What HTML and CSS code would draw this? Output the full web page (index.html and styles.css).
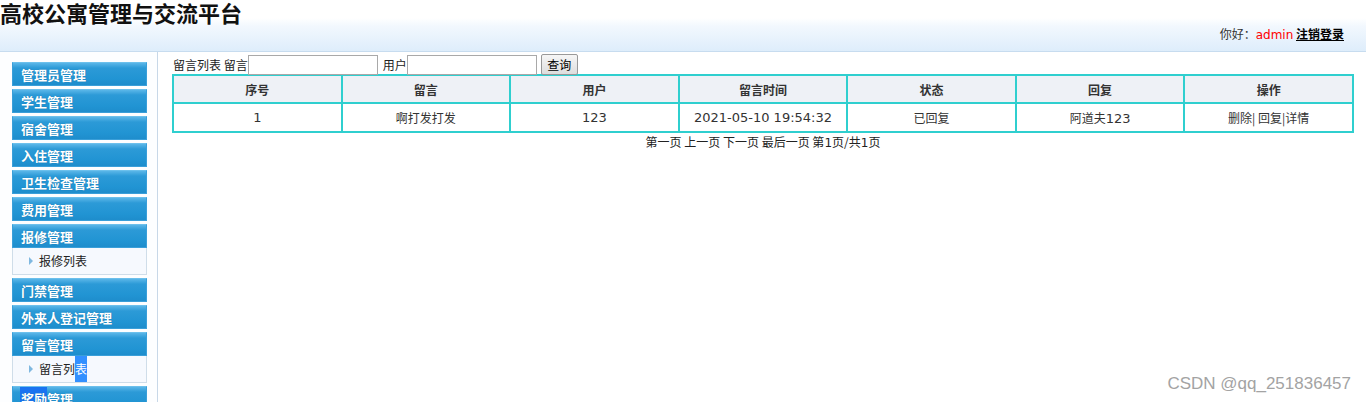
FILE: index.html
```html
<!DOCTYPE html>
<html lang="zh">
<head>
<meta charset="utf-8">
<title>高校公寓管理与交流平台</title>
<link rel="stylesheet" href="styles.css">
</head>
<body>
<div class="header">
  <h1 class="logo">高校公寓管理与交流平台</h1>
  <div class="userinfo">你好：<span class="uname">admin</span> <a class="logout" href="#">注销登录</a></div>
</div>
<div class="body">
  <div class="sidebar">
    <div class="menu">
      <div class="mh">管理员管理</div>
      <div class="mh">学生管理</div>
      <div class="mh">宿舍管理</div>
      <div class="mh">入住管理</div>
      <div class="mh">卫生检查管理</div>
      <div class="mh">费用管理</div>
      <div class="mh">报修管理</div>
      <div class="sub"><span class="tri"></span>报修列表</div>
      <div class="mh">门禁管理</div>
      <div class="mh">外来人登记管理</div>
      <div class="mh">留言管理</div>
      <div class="sub"><span class="tri"></span>留言列<span class="sel">表</span></div>
      <div class="mh"><span class="sel2">奖励</span>管理</div>
    </div>
  </div>
  <div class="main">
    <div class="search"><span class="lbl">留言列表 留言</span><input class="ipt" type="text"><span class="lbl lbl2">用户</span><input class="ipt" type="text"><button class="btn">查询</button></div>
    <table class="grid">
      <tr class="th">
        <td>序号</td><td>留言</td><td>用户</td><td>留言时间</td><td>状态</td><td>回复</td><td>操作</td>
      </tr>
      <tr>
        <td class="num">1</td><td>啊打发打发</td><td class="num">123</td><td class="num">2021-05-10 19:54:32</td><td>已回复</td><td>阿道夫<span class="n">123</span></td><td>删除| 回复|详情</td>
      </tr>
    </table>
    <div class="pager">第一页 上一页 下一页 最后一页 第<span class="n">1</span>页/共<span class="n">1</span>页</div>
  </div>
</div>
<div class="watermark">CSDN @qq_251836457</div>
</body>
</html>
```

FILE: styles.css
```css
html, body {
  margin: 0;
  padding: 0;
  background: #fff;
  height: 100%;
  overflow: hidden;
}
body {
  font-family: "DejaVu Sans", "Noto Sans CJK SC", sans-serif;
  font-size: 12px;
  color: #222;
  position: relative;
}
.header {
  height: 51px;
  border-bottom: 1px solid #c7dcef;
  background: linear-gradient(to bottom, #ffffff 0px, #ffffff 18px, #f2f8fe 26px, #deedfb 51px);
  position: relative;
}
.logo {
  margin: 0;
  font-family: "Noto Sans CJK SC", sans-serif;
  font-size: 22px;
  font-weight: bold;
  line-height: 24px;
  color: #111;
  padding-top: 0;
}
.userinfo {
  position: absolute;
  right: 22px;
  top: 25px;
  font-family: "Noto Sans CJK SC", "DejaVu Sans", sans-serif;
  font-size: 12px;
  line-height: 18px;
  color: #333;
}
.uname {
  color: #f00;
  font-family: "DejaVu Sans", sans-serif;
}
.logout {
  color: #000;
  font-weight: bold;
  text-decoration: underline;
}
.body {
  display: flex;
  height: 350px;
}
.sidebar {
  width: 157px;
  border-right: 1px solid #c8d8e8;
  background: #fdfeff;
  flex: none;
}
.menu {
  padding: 10px 0 0 12px;
  width: 135px;
  display: flex;
  flex-direction: column;
  gap: 3px;
}
.mh {
  height: 22px;
  line-height: 23px;
  border: 1px solid #3a9fd9;
  border-top-color: #6cc0ec;
  background: linear-gradient(to bottom, #5ab6e8 0px, #2c9ad7 5px, #2194d3 16px, #1e8dcc 22px);
  color: #fff;
  font-family: "Noto Sans CJK SC", sans-serif;
  font-weight: bold;
  font-size: 13px;
  padding-left: 8px;
  text-shadow: 0 0 1px #0d6aa0;
  white-space: nowrap;
}
.sub {
  height: 26px;
  line-height: 26px;
  margin-top: -3px;
  border: 1px solid #cfdde9;
  border-top: none;
  background: #f6f9fe;
  font-family: "Noto Sans CJK SC", sans-serif;
  font-size: 12px;
  color: #222;
  padding-left: 16px;
  display: flex;
  align-items: center;
}
.tri {
  width: 0;
  height: 0;
  border-top: 4px solid transparent;
  border-bottom: 4px solid transparent;
  border-left: 4px solid #7fb8e0;
  margin-right: 6px;
}
.sel {
  background: #3390ff;
  color: #fff;
  display: inline-block;
  line-height: 26px;
  height: 26px;
}
.sel2 {
  background: #1a73f0;
  display: inline-block;
  height: 22px;
  margin-left: -1px;
  padding-left: 1px;
}
.main {
  flex: 1;
  padding: 0 12px 0 14px;
}
.search {
  font-family: "Noto Sans CJK SC", sans-serif;
  height: 22px;
  line-height: 21px;
  white-space: nowrap;
  color: #222;
}
.lbl {
  white-space: pre;
  vertical-align: middle;
  margin-left: 1px;
}
.lbl2 {
  margin-left: 5px;
}
.ipt {
  width: 126px;
  height: 16px;
  border: 1px solid #a9a9a9;
  padding: 1px;
  margin: 0;
  font-size: 12px;
  vertical-align: middle;
}
.btn {
  margin: 0 0 0 4px;
  height: 21px;
  width: 37px;
  padding: 0;
  font-family: "Noto Sans CJK SC", sans-serif;
  font-size: 12px;
  color: #000;
  border: 1px solid #999;
  border-radius: 2px;
  background: linear-gradient(#f6f6f6, #dedede);
  vertical-align: middle;
}
.grid {
  width: 1182px;
  border-collapse: separate;
  border-spacing: 0;
  border: 1px solid #2fcfcf;
  margin-top: 0;
  table-layout: fixed;
}
.grid td {
  border: 1px solid #2fcfcf;
  text-align: center;
  font-family: "Noto Sans CJK SC", sans-serif;
  font-size: 12px;
  color: #333;
  height: 26px;
  padding: 0;
}
.grid tr:last-child td {
  height: 27px;
}
.th td {
  background: #eef1f6;
  font-weight: bold;
  color: #333;
}
.grid td.num, .n {
  font-family: "DejaVu Sans", sans-serif;
  font-size: 13px;
}
.pager .n {
  font-size: 12px;
}
.pager {
  text-align: center;
  width: 1182px;
  font-family: "Noto Sans CJK SC", "DejaVu Sans", sans-serif;
  font-size: 12px;
  line-height: 18px;
  color: #222;
}
.watermark {
  position: absolute;
  right: 15px;
  bottom: 8px;
  font-family: "Liberation Sans", sans-serif;
  font-size: 17px;
  color: #a3a3a3;
  text-shadow: 0 0 2px #fff;
}
```
